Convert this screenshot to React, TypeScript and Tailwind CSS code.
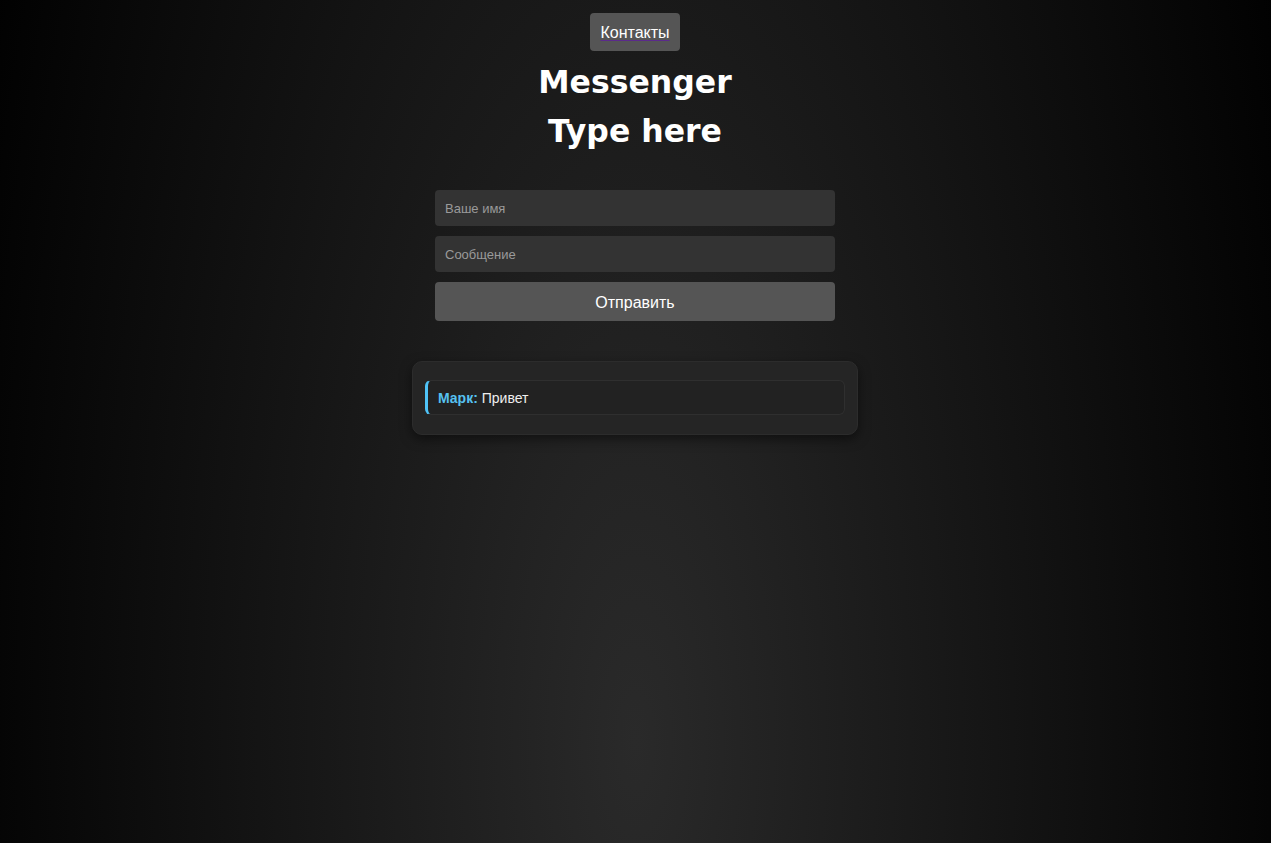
import React, { useState } from "react";

interface Message {
  author: string;
  text: string;
}

const initialMessages: Message[] = [{ author: "Марк", text: "Привет" }];

export default function App() {
  const [messages, setMessages] = useState<Message[]>(initialMessages);
  const [name, setName] = useState("");
  const [text, setText] = useState("");

  const send = (e: React.FormEvent) => {
    e.preventDefault();
    if (!name.trim() || !text.trim()) return;
    setMessages([...messages, { author: name, text }]);
    setText("");
  };

  return (
    <div className="min-h-screen w-full bg-[radial-gradient(ellipse_720px_1900px_at_50%_88%,#2a2a2a,#000)] font-['Liberation_Sans',Arial,sans-serif] text-white flex flex-col items-center pt-[13px] pr-[1px]">
      {/* top nav link */}
      <a
        href="#contacts"
        className="bg-[#555] rounded px-[10px] pt-[11px] pb-[9px] text-[16px] leading-[18px] text-white underline decoration-[#5b2a8c] underline-offset-[2px]"
      >
        Контакты
      </a>

      <h1 className="mt-[7px] text-center font-['DejaVu_Sans',Verdana,sans-serif] font-bold text-[31.5px] leading-[49px]">
        Messenger
        <br />
        Type here
      </h1>

      {/* form */}
      <form onSubmit={send} className="mt-[34px] w-[400px] flex flex-col gap-[10px]">
        <input
          value={name}
          onChange={(e) => setName(e.target.value)}
          placeholder="Ваше имя"
          className="h-[36px] w-full rounded bg-[#333] px-[10px] text-[13px] text-white placeholder:text-[#9a9a9a] outline-none"
        />
        <input
          value={text}
          onChange={(e) => setText(e.target.value)}
          placeholder="Сообщение"
          className="h-[36px] w-full rounded bg-[#333] px-[10px] text-[13px] text-white placeholder:text-[#9a9a9a] outline-none"
        />
        <button
          type="submit"
          className="h-[39px] w-full rounded bg-[#555] pt-[2px] text-[16px] text-white cursor-pointer"
        >
          Отправить
        </button>
      </form>

      {/* messages */}
      <div className="mt-[40px] w-[446px] rounded-[10px] border border-[#2c2c2c] bg-[#252525] px-[12px] pt-[18px] pb-[19px] shadow-[0_4px_12px_rgba(0,0,0,0.5)] flex flex-col gap-[8px]">
        {messages.map((m, i) => (
          <div
            key={i}
            className="rounded-[6px] border border-[#2f2f2f] border-l-[3px] border-l-[#4fc3f7] bg-[#222] pl-[10px] pr-[10px] pt-[9px] pb-[7px] text-[14px] leading-[17px] text-[#eee]"
          >
            <strong className="font-bold text-[#56c1f0]">{m.author}:</strong> {m.text}
          </div>
        ))}
      </div>
    </div>
  );
}
